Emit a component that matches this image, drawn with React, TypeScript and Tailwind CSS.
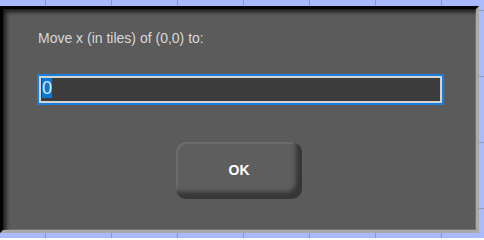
import React from "react";

export default function App() {
  return (
    <div className="relative w-[484px] h-[238px] overflow-hidden bg-[#aabaff] bg-[linear-gradient(to_right,#8e98b8_1px,transparent_1px),linear-gradient(to_bottom,#8e98b8_1px,transparent_1px)] bg-[size:66px_66px] bg-[position:45px_10px] pt-[6px]">
      <div
        className="w-[479px] h-[227px] bg-[#5b5b5b] border-t-[3px] border-l-[3px] border-t-black border-l-black border-r-[3px] border-b-[3px] border-r-[#a9a9a9] border-b-[#a9a9a9] shadow-[inset_3px_3px_4px_#1a1a1a,inset_-1px_-1px_0_#7a7a7a] flex flex-col"
        style={{ fontFamily: '"Liberation Sans", Arial, sans-serif' }}
      >
        <div className="pt-[21px] pl-[35px] text-[14px] leading-[17px] text-[#d8d8d8]">
          Move x (in tiles) of (0,0) to:
        </div>
        <div className="mt-[27px] ml-[34px] w-[407px] h-[31px] border-2 border-[#1a7fdc]">
          <div className="w-full h-full border-2 border-[#d4d4d4] bg-[#3c3c3c] flex items-start pl-[1px]">
            <span className="bg-[#0b78d6] text-[#d6ebff] text-[18px] leading-[20px] h-[20px]">0</span>
          </div>
        </div>
        <div className="mt-[37px] ml-[173px]">
          <button className="w-[126px] h-[57px] rounded-[10px] bg-[#5e5e5e] shadow-[inset_-6px_-7px_4px_#363636,inset_2px_2px_1px_#6c6c6c] text-white font-bold text-[14px] flex items-center justify-center">
            OK
          </button>
        </div>
      </div>
    </div>
  );
}
